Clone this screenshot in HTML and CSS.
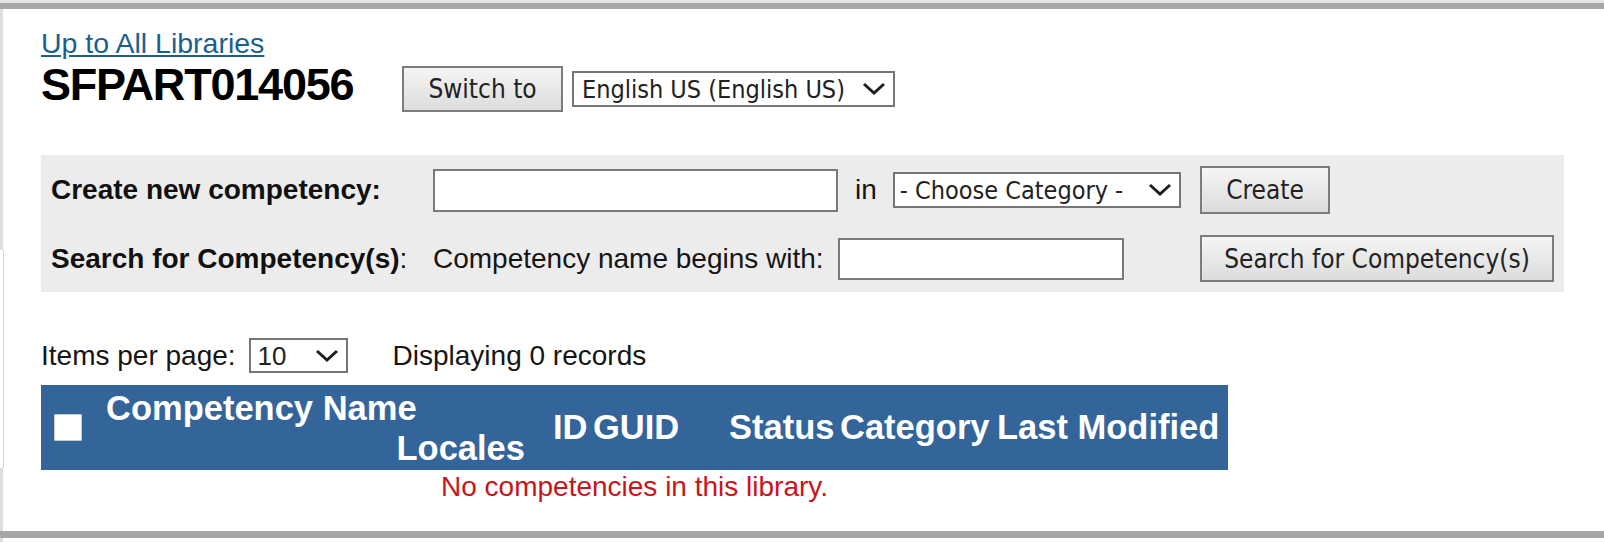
FILE: index.html
```html
<!DOCTYPE html>
<html lang="en">
<head>
    <meta charset="UTF-8">
    <meta name="viewport" content="width=device-width, initial-scale=1.0">
    <title>SFPART014056 - Competencies</title>
    <link rel="stylesheet" href="styles.css">
</head>
<body>
    <div class="frame">
        <a class="back-link" href="#">Up to All Libraries</a>

        <div class="title-row">
            <h1 class="lib-title">SFPART014056</h1>
            <button class="btn btn-switch" type="button">Switch to</button>
            <span class="select-wrap select-lang">
                <select class="select">
                    <option>English US (English US)</option>
                </select>
                <svg class="chevron" viewBox="0 0 24 14"><polyline points="2,2 12,11 22,2"/></svg>
            </span>
        </div>

        <form class="tools">
            <label class="tools-label">Create new competency:</label>
            <div class="tools-field">
                <input class="text-input input-name" type="text">
                <span class="in-word">in</span>
                <span class="select-wrap select-cat">
                    <select class="select">
                        <option>- Choose Category -</option>
                    </select>
                    <svg class="chevron" viewBox="0 0 24 14"><polyline points="2,2 12,11 22,2"/></svg>
                </span>
            </div>
            <button class="btn btn-create" type="button">Create</button>

            <label class="tools-label tools-label-plain"><b>Search for Competency(s)</b>:</label>
            <div class="tools-field">
                <span class="hint">Competency name begins with:</span>
                <input class="text-input input-search" type="text">
            </div>
            <button class="btn btn-search" type="button">Search for Competency(s)</button>
        </form>

        <div class="paging">
            <span>Items per page:</span>
            <span class="select-wrap select-per-page">
                <select class="select">
                    <option>10</option>
                    <option>25</option>
                    <option>50</option>
                </select>
                <svg class="chevron" viewBox="0 0 24 14"><polyline points="2,2 12,11 22,2"/></svg>
            </span>
            <span class="record-count">Displaying 0 records</span>
        </div>

        <table class="comp-table">
            <thead>
                <tr>
                    <th class="col-check"><input class="check" type="checkbox"></th>
                    <th class="col-name">
                        <span class="name-main">Competency Name</span>
                        <span class="name-sub">Locales</span>
                    </th>
                    <th class="col-id">ID</th>
                    <th class="col-guid">GUID</th>
                    <th class="col-status">Status</th>
                    <th class="col-cat">Category</th>
                    <th class="col-mod">Last Modified</th>
                </tr>
            </thead>
            <tbody>
                <tr>
                    <td class="empty" colspan="7">No competencies in this library.</td>
                </tr>
            </tbody>
        </table>
    </div>
</body>
</html>
```

FILE: styles.css
```css
html {
    background: #fff;
}
body {
    margin: 0;
    border-top: 3px solid #e4e4e4;
    font-family: "Liberation Sans", Arial, sans-serif;
    font-size: 28px;
    color: #151515;
    background:
        linear-gradient(#d2d2d2, #d2d2d2) no-repeat 3px 247px / 1px 218px,
        linear-gradient(to bottom, #dedede 0, #dedede 247px, #fff 247px, #fff 465px, #dedede 465px) no-repeat 0 0 / 3px 100%;
    min-height: 539px;
}
.frame {
    border-top: 6px solid #a6a6a6;
    border-bottom: 7px solid #a6a6a6;
    padding: 17px 0 27px 41px;
}

/* header */
.back-link {
    display: inline-block;
    line-height: 34px;
    font-size: 28.5px;
    color: #1b5f8f;
    text-decoration: underline;
}
.title-row {
    display: flex;
    align-items: flex-start;
}
.lib-title {
    flex: 0 0 361px;
    margin: 0;
    font-size: 45px;
    line-height: 50px;
    letter-spacing: -1.2px;
    font-weight: bold;
    color: #000;
}
.btn-switch {
    margin-top: 6px;
    width: 161px;
    height: 46px;
}
.select-lang {
    margin: 11px 0 0 9px;
}
.select-lang .select {
    width: 323px;
    height: 36px;
}

/* controls */
.btn {
    font-family: "DejaVu Sans Condensed", Tahoma, sans-serif;
    font-size: 26px;
    color: #222;
    background: linear-gradient(#f5f5f5, #dcdcdc);
    border: 2px solid #7c7c7c;
    border-radius: 0;
    padding: 0;
    cursor: pointer;
}
.select-wrap {
    position: relative;
    display: inline-flex;
}
.select {
    appearance: none;
    -webkit-appearance: none;
    box-sizing: border-box;
    border: 2px solid #767676;
    border-radius: 0;
    background: #fff;
    font-family: "DejaVu Sans Condensed", Tahoma, sans-serif;
    font-size: 25px;
    color: #222;
    padding: 0 40px 0 8px;
    margin: 0;
}
.chevron {
    position: absolute;
    right: 9px;
    top: 50%;
    width: 24px;
    height: 14px;
    margin-top: -7px;
    pointer-events: none;
}
.chevron polyline {
    fill: none;
    stroke: #1e1e1e;
    stroke-width: 3;
}
.text-input {
    box-sizing: border-box;
    border: 2px solid #7a7a7a;
    background: #fff;
    margin: 0;
    padding: 0 6px;
    font-size: 24px;
}

/* create / search panel */
.tools {
    margin: 43px 0 0;
    width: 1523px;
    box-sizing: border-box;
    padding: 11px 10px 10px;
    background: #ececec;
    display: grid;
    grid-template-columns: 382px 767px auto;
    row-gap: 21px;
    align-items: center;
}
.tools-label {
    font-weight: bold;
    color: #111;
}
.tools-label-plain {
    font-weight: normal;
}
.tools-field {
    display: flex;
    align-items: center;
}
.input-name {
    width: 405px;
    height: 43px;
}
.in-word {
    margin: 0 16px 0 17px;
}
.select-cat .select {
    width: 288px;
    height: 36px;
    padding-left: 5px;
}
.hint {
    flex: 0 0 405px;
}
.input-search {
    width: 286px;
    height: 42px;
}
.btn-create {
    justify-self: start;
    width: 130px;
    height: 48px;
}
.btn-search {
    justify-self: start;
    width: 354px;
    height: 47px;
}

/* paging */
.paging {
    margin-top: 46px;
    display: flex;
    align-items: center;
    height: 35px;
}
.select-per-page {
    margin-left: 13px;
}
.select-per-page .select {
    width: 99px;
    height: 35px;
    font-family: "Liberation Sans", Arial, sans-serif;
    font-size: 26px;
    padding-left: 7px;
}
.record-count {
    margin-left: 45px;
}

/* table */
.comp-table {
    margin-top: 12px;
    width: 1187px;
    table-layout: fixed;
    border-collapse: collapse;
    border-spacing: 0;
}
.comp-table th {
    height: 85px;
    padding: 0;
    background: #34659a;
    color: #fff;
    font-size: 34.5px;
    font-weight: bold;
    text-align: left;
    vertical-align: middle;
    white-space: nowrap;
}
.col-check {
    width: 65px;
}
.check {
    appearance: none;
    -webkit-appearance: none;
    display: block;
    width: 28px;
    height: 27px;
    margin: -1px 0 0 13px;
    background: #fff;
    border: 1px solid #c9c9c9;
    border-radius: 1px;
    box-sizing: border-box;
}
.col-name {
    width: 424px;
}
.name-main,
.name-sub {
    display: block;
    line-height: 40px;
}
.name-sub {
    text-align: right;
    padding-right: 5px;
}
.comp-table .col-id {
    width: 31px;
    padding-left: 23px;
}
.comp-table .col-guid {
    width: 136px;
    padding-left: 9px;
}
.col-status {
    width: 111px;
}
.col-cat {
    width: 157px;
}
.col-mod {
    width: 231px;
}
.empty {
    padding: 0;
    line-height: 34px;
    text-align: center;
    color: #c8141a;
}
```
